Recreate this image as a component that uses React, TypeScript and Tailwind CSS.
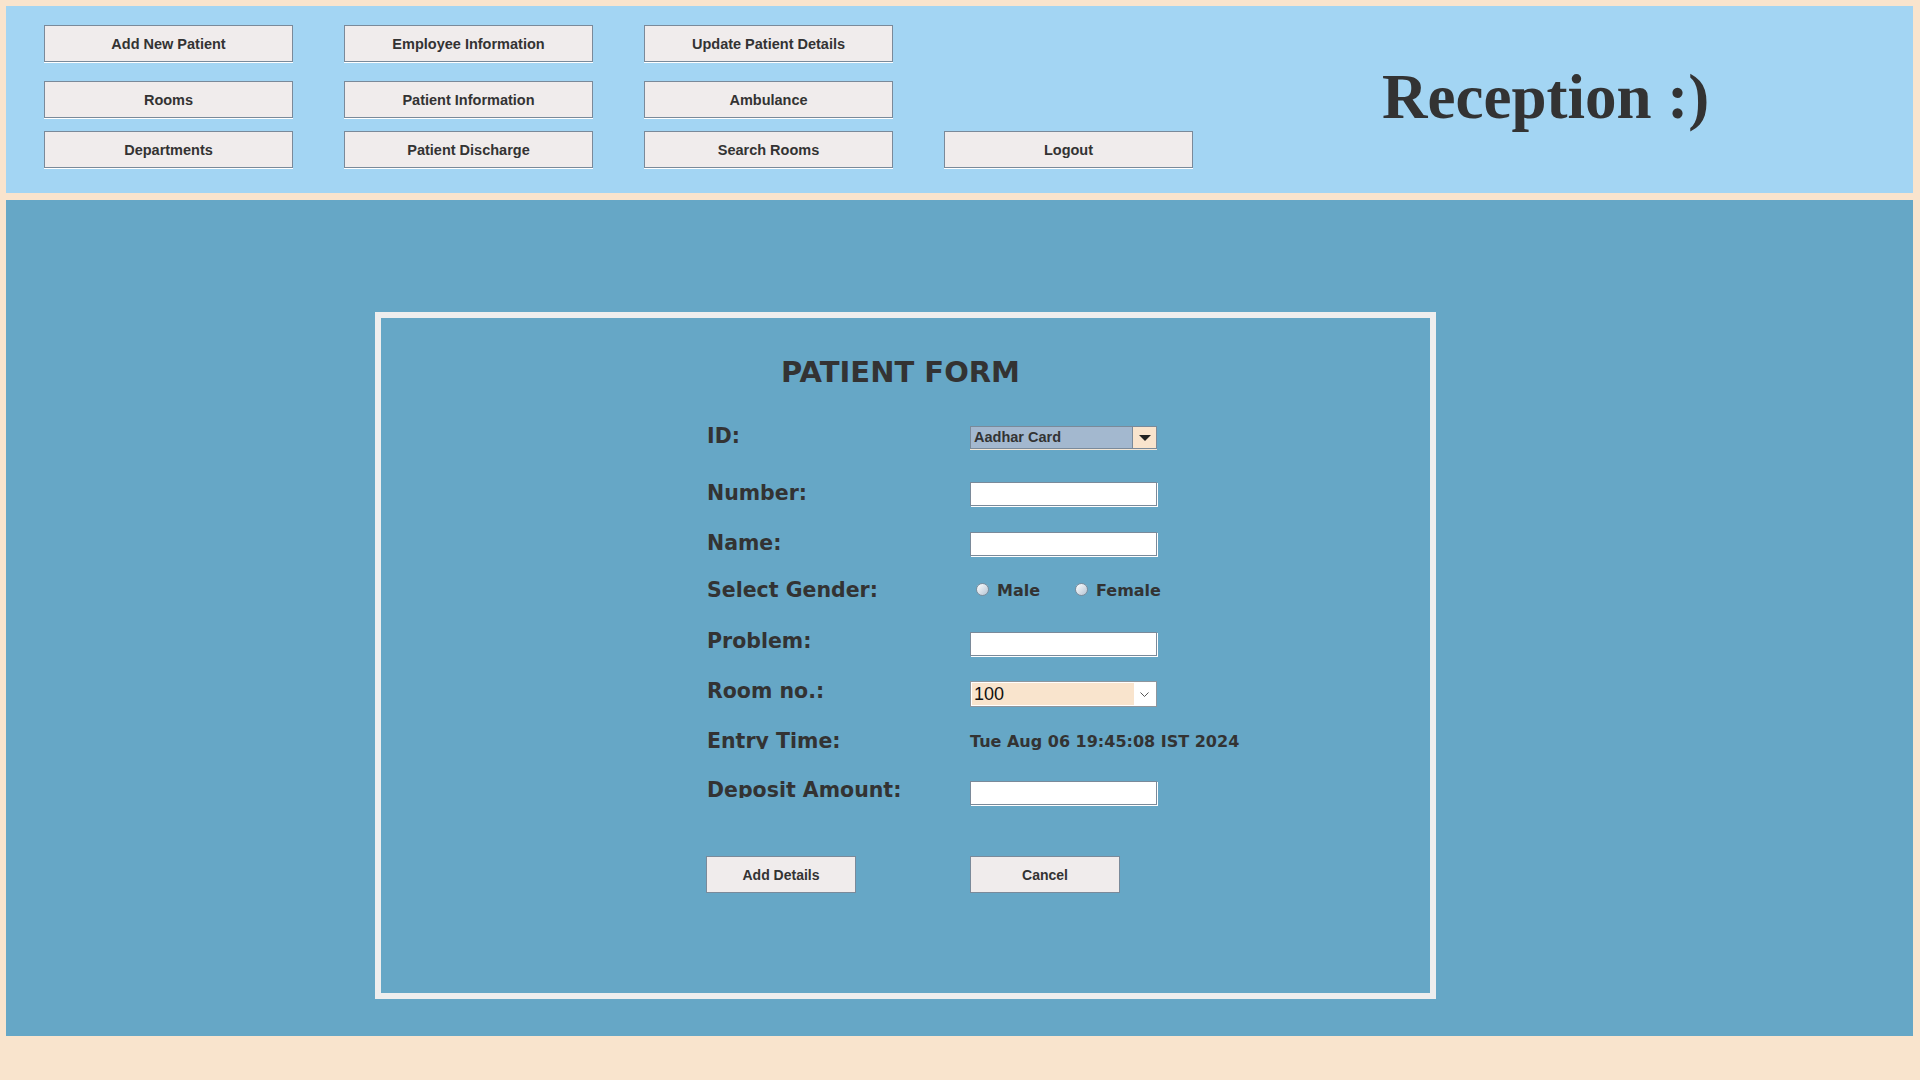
import React from "react";

const TopBtn = ({ label }: { label: string }) => (
  <button
    type="button"
    className="w-[249px] h-[37px] pt-[2px] bg-[#F0ECEC] border border-[#7A8A9A] shadow-[0_1px_0_#ffffff] flex items-center justify-center font-['Liberation_Sans',Arial,sans-serif] font-bold text-[14.5px] text-[#333333]"
  >
    {label}
  </button>
);

const FormBtn = ({ label }: { label: string }) => (
  <button
    type="button"
    className="w-[150px] h-[37px] pt-[2px] bg-[#F0ECEC] border border-[#7A8A9A] flex items-center justify-center font-['Liberation_Sans',Arial,sans-serif] font-bold text-[14px] text-[#333333]"
  >
    {label}
  </button>
);

const Label = ({ text, clip }: { text: string; clip?: boolean }) =>
  clip ? (
    <div className="w-[263px] h-[20px] overflow-hidden leading-[24px] font-['DejaVu_Sans',sans-serif] font-bold text-[20.5px] text-[#333333] whitespace-nowrap">
      {text}
    </div>
  ) : (
    <div className="w-[263px] h-[24px] leading-[24px] font-['DejaVu_Sans',sans-serif] font-bold text-[20.5px] text-[#333333] whitespace-nowrap">
      {text}
    </div>
  );

const TextInput = ({ mt }: { mt: string }) => (
  <div className={mt}>
    <input
      type="text"
      className="block w-[187px] h-[24px] bg-white border border-[#7A8A9A] shadow-[1px_1px_0_#ffffff] outline-none px-1 text-[14px] font-['Liberation_Sans',Arial,sans-serif]"
    />
  </div>
);

const Radio = ({ text, w }: { text: string; w: string }) => (
  <div className={`flex items-start ${w}`}>
    <div className="mt-[2px] w-[13px] h-[13px] rounded-full border border-[#7D8D9C] bg-linear-to-br from-white to-[#B4C4D4]" />
    <div className="ml-[8px] leading-[20px] font-['DejaVu_Sans',sans-serif] font-bold text-[16px] text-[#333333]">
      {text}
    </div>
  </div>
);

export default function App() {
  return (
    <div className="w-[1920px] h-[1080px] bg-[#F9E4CD] pt-[6px] pl-[6px] flex flex-col gap-[7px] overflow-hidden">
      {/* Top bar */}
      <div className="w-[1907px] h-[187px] bg-[#A3D5F3] pl-[38px] pt-[19px] flex items-start">
        <div className="flex flex-col">
          <div className="flex gap-[51px]">
            <TopBtn label="Add New Patient" />
            <TopBtn label="Employee Information" />
            <TopBtn label="Update Patient Details" />
          </div>
          <div className="flex gap-[51px] mt-[19px]">
            <TopBtn label="Rooms" />
            <TopBtn label="Patient Information" />
            <TopBtn label="Ambulance" />
          </div>
          <div className="flex gap-[51px] mt-[13px]">
            <TopBtn label="Departments" />
            <TopBtn label="Patient Discharge" />
            <TopBtn label="Search Rooms" />
            <TopBtn label="Logout" />
          </div>
        </div>
        <div className="ml-[189px] mt-[41px] leading-[62px] text-[63px] font-bold font-['Liberation_Serif','Times_New_Roman',serif] text-[#333333] whitespace-nowrap">
          Reception :)
        </div>
      </div>

      {/* Main panel */}
      <div className="w-[1907px] h-[836px] bg-[#66A7C6] pl-[369px] pt-[112px]">
        <div className="w-[1061px] h-[687px] border-[6px] border-[#EEEEEE] pl-[326px] pt-[37px]">
          <div className="flex flex-col">
            <div className="ml-[74px] h-[34px] leading-[34px] text-[29px] font-bold font-['DejaVu_Sans',sans-serif] text-[#333333]">
              PATIENT FORM
            </div>
            <div className="h-[35px]" />

            {/* ID */}
            <div className="flex items-start h-[57px]">
              <Label text="ID:" />
              <div className="mt-[2px] w-[187px]">
                <div className="flex h-[23px] border border-[#7A8A9A] bg-[#A3B8CF]">
                  <div className="flex-1 flex items-center pl-[3px] font-['Liberation_Sans',Arial,sans-serif] font-bold text-[14.5px] text-[#333333]">
                    Aadhar Card
                  </div>
                  <div className="w-[24px] border-l border-[#7A8A9A] bg-[#F9E4CD] flex items-center justify-center">
                    <svg width="12" height="6" viewBox="0 0 12 6">
                      <polygon points="0,0 12,0 6,6" fill="#222222" />
                    </svg>
                  </div>
                </div>
                <div className="h-[1px] bg-[#F3E6D6]" />
              </div>
            </div>

            {/* Number */}
            <div className="flex items-start h-[50px]">
              <Label text="Number:" />
              <TextInput mt="mt-[1px]" />
            </div>

            {/* Name */}
            <div className="flex items-start h-[47px]">
              <Label text="Name:" />
              <TextInput mt="mt-[1px]" />
            </div>

            {/* Gender */}
            <div className="flex items-start h-[51px]">
              <Label text="Select Gender:" />
              <div className="flex items-start pl-[6px] mt-[3px]">
                <Radio text="Male" w="w-[99px]" />
                <Radio text="Female" w="w-[100px]" />
              </div>
            </div>

            {/* Problem */}
            <div className="flex items-start h-[50px]">
              <Label text="Problem:" />
              <TextInput mt="mt-[3px]" />
            </div>

            {/* Room */}
            <div className="flex items-start h-[50px]">
              <Label text="Room no.:" />
              <div className="mt-[2px] w-[187px] h-[26px] border border-[#8E969E] bg-white p-[1px] flex">
                <div className="w-[162px] h-full bg-[#F9E4CD] flex items-center pl-[2px] font-['Liberation_Sans',Arial,sans-serif] text-[18px] text-[#111111]">
                  100
                </div>
                <div className="flex-1 flex items-center justify-center">
                  <svg width="9" height="5" viewBox="0 0 9 5">
                    <polyline points="0.5,0.5 4.5,4.5 8.5,0.5" fill="none" stroke="#555555" strokeWidth="1" />
                  </svg>
                </div>
              </div>
            </div>

            {/* Entry time */}
            <div className="flex items-start h-[49px]">
              <Label text="Entry Time:" clip />
              <div className="mt-[3px] leading-[20px] font-['DejaVu_Sans',sans-serif] font-bold text-[16px] text-[#333333] whitespace-nowrap">
                Tue Aug 06 19:45:08 IST 2024
              </div>
            </div>

            {/* Deposit */}
            <div className="flex items-start h-[78px]">
              <Label text="Deposit Amount:" clip />
              <TextInput mt="mt-[3px]" />
            </div>

            {/* Buttons */}
            <div className="flex -ml-[1px] gap-[114px]">
              <FormBtn label="Add Details" />
              <FormBtn label="Cancel" />
            </div>
          </div>
        </div>
      </div>
    </div>
  );
}
